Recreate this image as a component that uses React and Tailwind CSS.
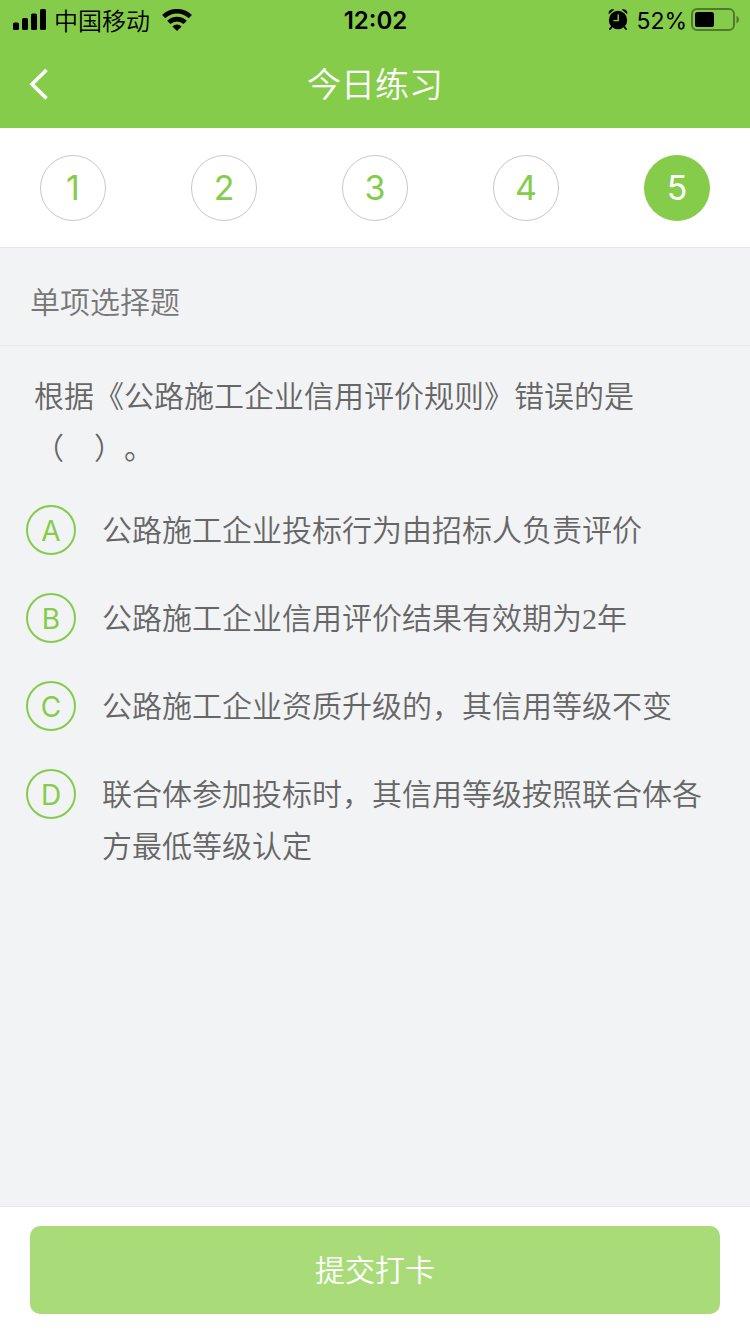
import { useState } from 'react'

const STEPS = [1, 2, 3, 4, 5]

const OPTIONS = [
  { key: 'A', text: '公路施工企业投标行为由招标人负责评价' },
  {
    key: 'B',
    text: (
      <>
        公路施工企业信用评价结果有效期为<span className="font-['Liberation_Serif',serif] leading-none">2</span>年
      </>
    ),
  },
  { key: 'C', text: '公路施工企业资质升级的，其信用等级不变' },
  { key: 'D', text: '联合体参加投标时，其信用等级按照联合体各方最低等级认定' },
]

function SignalIcon() {
  return (
    <svg width="34" height="22" viewBox="0 0 34 22" aria-hidden="true">
      <rect x="1" y="13.5" width="6" height="7.5" rx="1.6" />
      <rect x="10" y="9" width="6" height="12" rx="1.6" />
      <rect x="19" y="4.5" width="6" height="16.5" rx="1.6" />
      <rect x="28" y="0" width="6" height="21" rx="1.6" />
    </svg>
  )
}

function WifiIcon() {
  return (
    <svg width="30" height="22" viewBox="0 0 30 22" aria-hidden="true">
      <g fill="none" stroke="#000" strokeWidth="4.6">
        <path d="M1.7 7.6a19.2 19.2 0 0 1 26.6 0" />
        <path d="M6.8 13.4a11.8 11.8 0 0 1 16.4 0" />
      </g>
      <path d="M15 22l-4.6-4.6a6.5 6.5 0 0 1 9.2 0z" />
    </svg>
  )
}

function AlarmIcon() {
  return (
    <svg width="20" height="22" viewBox="0 0 20 22" aria-hidden="true">
      <circle cx="10" cy="11" r="9.2" />
      <path d="M.8 5.2A4 4 0 0 1 6.4.6zM19.2 5.2A4 4 0 0 0 13.6.6z" />
      <path d="M4 17.5l-2 2.5M16 17.5l2 2.5" stroke="#000" strokeWidth="2" strokeLinecap="round" />
      <path d="M10.2 5.4v6.2H5.4" fill="none" stroke="#86cc4b" strokeWidth="1.4" />
    </svg>
  )
}

function BatteryIcon() {
  return (
    <svg width="48" height="24" viewBox="0 0 48 24" aria-hidden="true">
      <rect x="1" y="1" width="42" height="21" rx="5" fill="none" stroke="#000" strokeOpacity=".4" strokeWidth="2" />
      <rect x="4" y="4" width="19" height="15" rx="2.6" />
      <path d="M45.5 8v7.5c1.6-.6 2.5-2 2.5-3.7s-.9-3.2-2.5-3.8z" fillOpacity=".4" />
    </svg>
  )
}

function StatusBar() {
  return (
    <div className="grid h-10 grid-cols-[1fr_auto_1fr] items-center pr-[11px] pl-3 text-2xl text-black">
      <div className="flex items-center gap-2">
        <SignalIcon />
        <span className="pt-1">中国移动</span>
        <span className="pl-1"><WifiIcon /></span>
      </div>
      <span className="pt-0.5 font-semibold">12:02</span>
      <div className="flex items-center justify-end gap-1">
        <AlarmIcon />
        <span className="pt-0.5 pl-1 text-[23px] font-normal">52%</span>
        <BatteryIcon />
      </div>
    </div>
  )
}

export default function App() {
  const [step, setStep] = useState(5)
  const [answer, setAnswer] = useState('')

  return (
    <div className="flex min-h-screen flex-col bg-[#f2f3f5] font-['Inter','Noto_Sans_CJK_SC',sans-serif] font-[350] text-[#666] [text-spacing-trim:space-all]">
      <header className="bg-[#86cc4b]">
        <StatusBar />
        <div className="grid h-22 grid-cols-[80px_1fr_80px] items-center">
          <button type="button" aria-label="返回" className="flex h-full items-center pl-7">
            <svg width="22" height="32" viewBox="0 0 22 32" fill="none" stroke="#fff" strokeWidth="3.6">
              <path d="M18.5 2L4 16.2l14.5 14.2" />
            </svg>
          </button>
          <h1 className="text-center text-[34px] font-[350] text-white">今日练习</h1>
        </div>
      </header>

      <nav className="flex h-30 items-center justify-between border-b border-[#e6e6e6] bg-white px-10">
        {STEPS.map(n => (
          <button
            key={n}
            type="button"
            onClick={() => setStep(n)}
            className={
              n === step
                ? 'size-[66px] rounded-full border border-[#86cc4b] bg-[#86cc4b] text-[34px] font-normal text-white'
                : 'size-[66px] rounded-full border border-[#c8c8c8] text-[34px] font-normal text-[#86cc4b]'
            }
          >
            {n}
          </button>
        ))}
      </nav>

      <main className="flex-1">
        <h2 className="border-b border-[#e8e9eb] px-[30px] pt-7 pb-[17px] text-[30px] leading-[52px] font-[350] text-[#777]">
          单项选择题
        </h2>
        <section className="px-[26px] pt-6">
          <p id="question" className="px-2 text-[30px] leading-[52px]">
            根据《公路施工企业信用评价规则》错误的是
            <br />
            （　）。
          </p>
          <div role="radiogroup" aria-labelledby="question" className="mt-[30px] flex flex-col gap-9">
            {OPTIONS.map(o => (
              <label key={o.key} className="relative flex cursor-pointer items-start gap-[26px]">
                <input
                  type="radio"
                  name="answer"
                  value={o.key}
                  checked={answer === o.key}
                  onChange={() => setAnswer(o.key)}
                  className="peer sr-only"
                />
                <span className="mt-px flex size-[50px] shrink-0 items-center justify-center rounded-full border-2 border-[#86cc4b] pt-0.5 text-[28px] font-normal text-[#86cc4b] peer-checked:bg-[#86cc4b] peer-checked:text-white">
                  {o.key}
                </span>
                <span className="text-[30px] leading-[52px]">{o.text}</span>
              </label>
            ))}
          </div>
        </section>
      </main>

      <footer className="border-t border-[#e8e9eb] bg-white px-[30px] pt-[19px] pb-5">
        <button type="button" className="h-22 w-full rounded-[10px] bg-[#a9dc79] text-[30px] text-white">
          提交打卡
        </button>
      </footer>
    </div>
  )
}
